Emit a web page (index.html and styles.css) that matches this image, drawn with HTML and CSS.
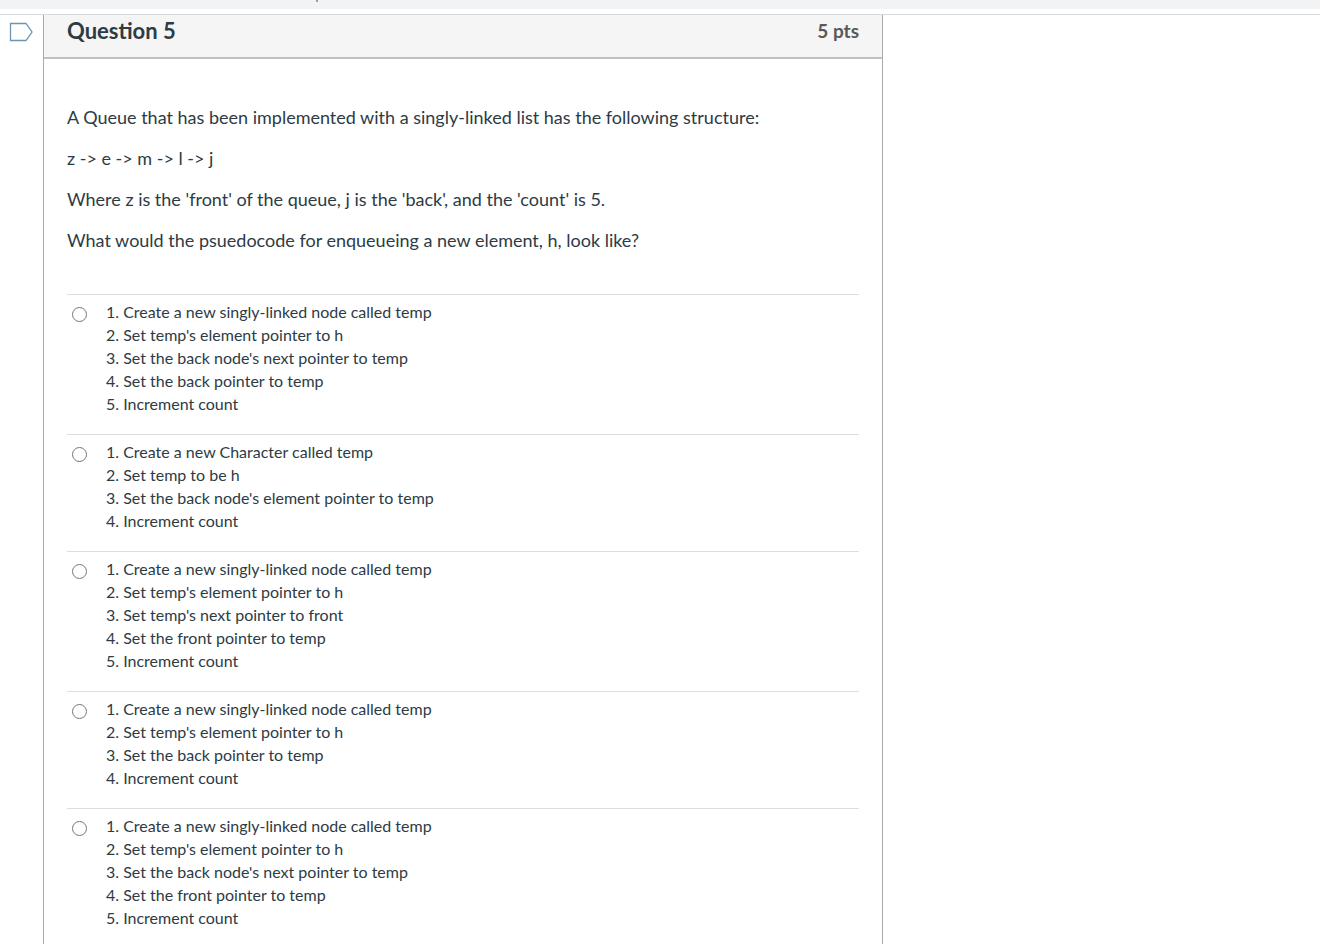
FILE: index.html
```html
<!DOCTYPE html>
<html lang="en">
<head>
    <meta charset="UTF-8">
    <meta name="viewport" content="width=device-width, initial-scale=1.0">
    <title>Question 5</title>
    <link rel="stylesheet" href="styles.css">
</head>
<body>

    <div class="top-bar"><span class="top-mark"></span></div>

    <main class="quiz">
        <button type="button" class="flag" aria-label="Flag question 5">
            <svg width="24" height="20" viewBox="0 0 24 20">
                <path d="M1.5 1.5H17L23 10L17 18.5H1.5Z" fill="none" stroke="#6d94b0" stroke-width="1.3"/>
            </svg>
        </button>

        <form class="question">
            <div class="question-header">
                <h2>Question 5</h2>
                <span class="points">5 pts</span>
            </div>

            <div class="question-text">
                <p>A Queue that has been implemented with a singly-linked list has the following structure:</p>
                <p>z -&gt; e -&gt; m -&gt; l -&gt; j</p>
                <p>Where z is the 'front' of the queue, j is the 'back', and the 'count' is 5.</p>
                <p>What would the psuedocode for enqueueing a new element, h, look like?</p>
            </div>

            <div class="answers">
                <div class="answer">
                    <input type="radio" name="q5" id="a1">
                    <label for="a1">
                        1. Create a new singly-linked node called temp<br>
                        2. Set temp's element pointer to h<br>
                        3. Set the back node's next pointer to temp<br>
                        4. Set the back pointer to temp<br>
                        5. Increment count
                    </label>
                </div>
                <div class="answer">
                    <input type="radio" name="q5" id="a2">
                    <label for="a2">
                        1. Create a new Character called temp<br>
                        2. Set temp to be h<br>
                        3. Set the back node's element pointer to temp<br>
                        4. Increment count
                    </label>
                </div>
                <div class="answer">
                    <input type="radio" name="q5" id="a3">
                    <label for="a3">
                        1. Create a new singly-linked node called temp<br>
                        2. Set temp's element pointer to h<br>
                        3. Set temp's next pointer to front<br>
                        4. Set the front pointer to temp<br>
                        5. Increment count
                    </label>
                </div>
                <div class="answer">
                    <input type="radio" name="q5" id="a4">
                    <label for="a4">
                        1. Create a new singly-linked node called temp<br>
                        2. Set temp's element pointer to h<br>
                        3. Set the back pointer to temp<br>
                        4. Increment count
                    </label>
                </div>
                <div class="answer">
                    <input type="radio" name="q5" id="a5">
                    <label for="a5">
                        1. Create a new singly-linked node called temp<br>
                        2. Set temp's element pointer to h<br>
                        3. Set the back node's next pointer to temp<br>
                        4. Set the front pointer to temp<br>
                        5. Increment count
                    </label>
                </div>
            </div>
        </form>
    </main>

</body>
</html>
```

FILE: styles.css
```css
* {
    box-sizing: border-box;
}

body {
    margin: 0;
    min-height: 100vh;
    display: flex;
    flex-direction: column;
    background-color: #fff;
    font-family: Lato, sans-serif;
    color: #2d3b45;
}

.top-bar {
    height: 9px;
    padding-left: 316px;
    background-color: #f1f3f4;
}

.top-mark {
    display: block;
    width: 2px;
    height: 2px;
    background-color: #a09a9a;
}

/* Quiz area */
.quiz {
    flex: 1;
    display: flex;
    align-items: stretch;
    margin-top: 5px;
    border-top: 1px solid #d8d8d8;
}

.flag {
    align-self: flex-start;
    width: 43px;
    padding: 7px 0 0 9px;
    border: none;
    background: none;
    text-align: left;
    cursor: pointer;
}

.flag svg {
    display: block;
}

.question {
    flex: 1;
    max-width: 840px;
    border: solid #aaa;
    border-width: 0 1px;
}

.question-header {
    display: flex;
    justify-content: space-between;
    padding: 0 23px 10px;
    border-bottom: 2px solid #c1c1c1;
    background-color: #f5f5f5;
    line-height: 32px;
}

.question-header h2 {
    margin: 0;
    font-size: 22px;
    font-weight: 700;
}

.points {
    font-size: 19px;
    font-weight: 700;
    color: #595959;
}

.question-text {
    padding: 45px 23px 40px;
    font-size: 18px;
    line-height: 27px;
}

.question-text p {
    margin: 0 0 14px;
}

.question-text p:last-child {
    margin-bottom: 0;
}

/* Answers */
.answers {
    padding: 0 23px;
    font-size: 16px;
    line-height: 23px;
}

.answer {
    display: flex;
    align-items: flex-start;
    gap: 19px;
    padding: 5px 0 19px;
    border-top: 1px solid #ddd;
}

.answer:last-child {
    padding-bottom: 0;
}

.answer input {
    appearance: none;
    width: 15px;
    height: 15px;
    margin: 7px 0 0 5px;
    border: 1px solid #767676;
    border-radius: 50%;
    background-color: #fff;
}

.answer input:checked {
    border: 4px solid #0374b5;
}
```
